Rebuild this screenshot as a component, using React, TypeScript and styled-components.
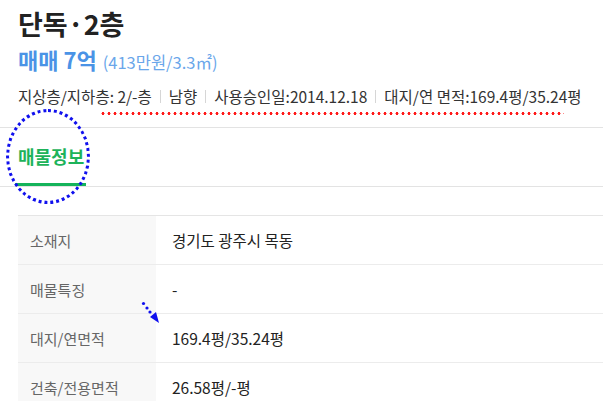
import React from "react";
import styled, { createGlobalStyle } from "styled-components";

const GlobalStyle = createGlobalStyle`
  html, body {
    margin: 0;
    padding: 0;
    background: #fff;
  }
  body {
    font-family: "Noto Sans CJK KR", "Noto Sans", sans-serif;
    color: #222;
  }
`;

const Page = styled.div`
  position: relative;
  width: 603px;
  height: 401px;
  overflow: hidden;
`;

const Header = styled.header`
  padding: 6px 18px 20px;
  border-bottom: 1px solid #e3e3e3;
`;

const Title = styled.h1`
  margin: 0;
  font-size: 27px;
  line-height: 36px;
  font-weight: 700;
  color: #222;
`;

const PriceLine = styled.div`
  margin-top: 2px;
  display: flex;
  align-items: baseline;
  gap: 6px;
  line-height: 30px;
`;

const Price = styled.span`
  font-size: 22px;
  font-weight: 700;
  color: #4a93e6;
`;

const UnitPrice = styled.span`
  font-size: 16.5px;
  color: #6aa6ea;
`;

const InfoLine = styled.div`
  margin-top: 8px;
  display: flex;
  align-items: center;
  font-size: 15.5px;
  line-height: 22px;
  color: #333;
  white-space: nowrap;
`;

const Sep = styled.span`
  width: 1px;
  height: 13px;
  background: #d6d6d6;
  margin: 0 8px;
`;

const TabBar = styled.nav`
  display: flex;
  height: 58px;
  padding-left: 15px;
  border-bottom: 1px solid #e3e3e3;
`;

const Tab = styled.div<{ $active?: boolean }>`
  display: flex;
  align-items: center;
  padding: 0 2px 0 3px;
  font-size: 18px;
  font-weight: 700;
  color: ${(p) => (p.$active ? "#1db35a" : "#666")};
  border-bottom: 3px solid ${(p) => (p.$active ? "#14b35a" : "transparent")};
  box-sizing: border-box;
`;

const Table = styled.div`
  margin: 28px 0 0 18px;
  border-top: 1px solid #e5e5e5;
`;

const Row = styled.div`
  display: grid;
  grid-template-columns: 138px 1fr;
  height: 48px;
  border-bottom: 1px solid #ececec;
`;

const Label = styled.div`
  display: flex;
  align-items: center;
  padding-left: 12px;
  background: #f8f8f8;
  font-size: 15px;
  color: #666;
`;

const Value = styled.div`
  display: flex;
  align-items: center;
  padding-left: 16px;
  font-size: 15.5px;
  color: #222;
`;

const RedDots = styled.div`
  position: absolute;
  left: 100px;
  top: 112px;
  width: 464px;
  height: 3px;
  background-image: radial-gradient(circle, #ff1a1a 1.4px, transparent 1.6px);
  background-size: 6px 3px;
`;

const Circle = styled.div`
  position: absolute;
  left: 6px;
  top: 109px;
  width: 78px;
  height: 89px;
  border: 3px dotted #1010ee;
  border-radius: 50%;
`;

const Arrow = styled.svg`
  position: absolute;
  left: 140px;
  top: 300px;
`;

const rows = [
  { label: "소재지", value: "경기도 광주시 목동" },
  { label: "매물특징", value: "-" },
  { label: "대지/연면적", value: "169.4평/35.24평" },
  { label: "건축/전용면적", value: "26.58평/-평" },
];

const info = [
  "지상층/지하층: 2/-층",
  "남향",
  "사용승인일:2014.12.18",
  "대지/연 면적:169.4평/35.24평",
];

export default function App() {
  return (
    <Page>
      <GlobalStyle />
      <Header>
        <Title>단독·2층</Title>
        <PriceLine>
          <Price>매매 7억</Price>
          <UnitPrice>(413만원/3.3㎡)</UnitPrice>
        </PriceLine>
        <InfoLine>
          {info.map((t, i) => (
            <React.Fragment key={t}>
              {i > 0 && <Sep />}
              <span>{t}</span>
            </React.Fragment>
          ))}
        </InfoLine>
      </Header>
      <TabBar>
        <Tab $active>매물정보</Tab>
      </TabBar>
      <Table>
        {rows.map((r) => (
          <Row key={r.label}>
            <Label>{r.label}</Label>
            <Value>{r.value}</Value>
          </Row>
        ))}
      </Table>
      <RedDots />
      <Circle />
      <Arrow width="24" height="26" viewBox="0 0 24 26">
        <circle cx="3.5" cy="3.5" r="1.6" fill="#1010ee" />
        <circle cx="7" cy="8" r="1.6" fill="#1010ee" />
        <circle cx="10" cy="12" r="1.6" fill="#1010ee" />
        <polygon points="10,17 16,12 19,23" fill="#1010ee" />
      </Arrow>
    </Page>
  );
}
